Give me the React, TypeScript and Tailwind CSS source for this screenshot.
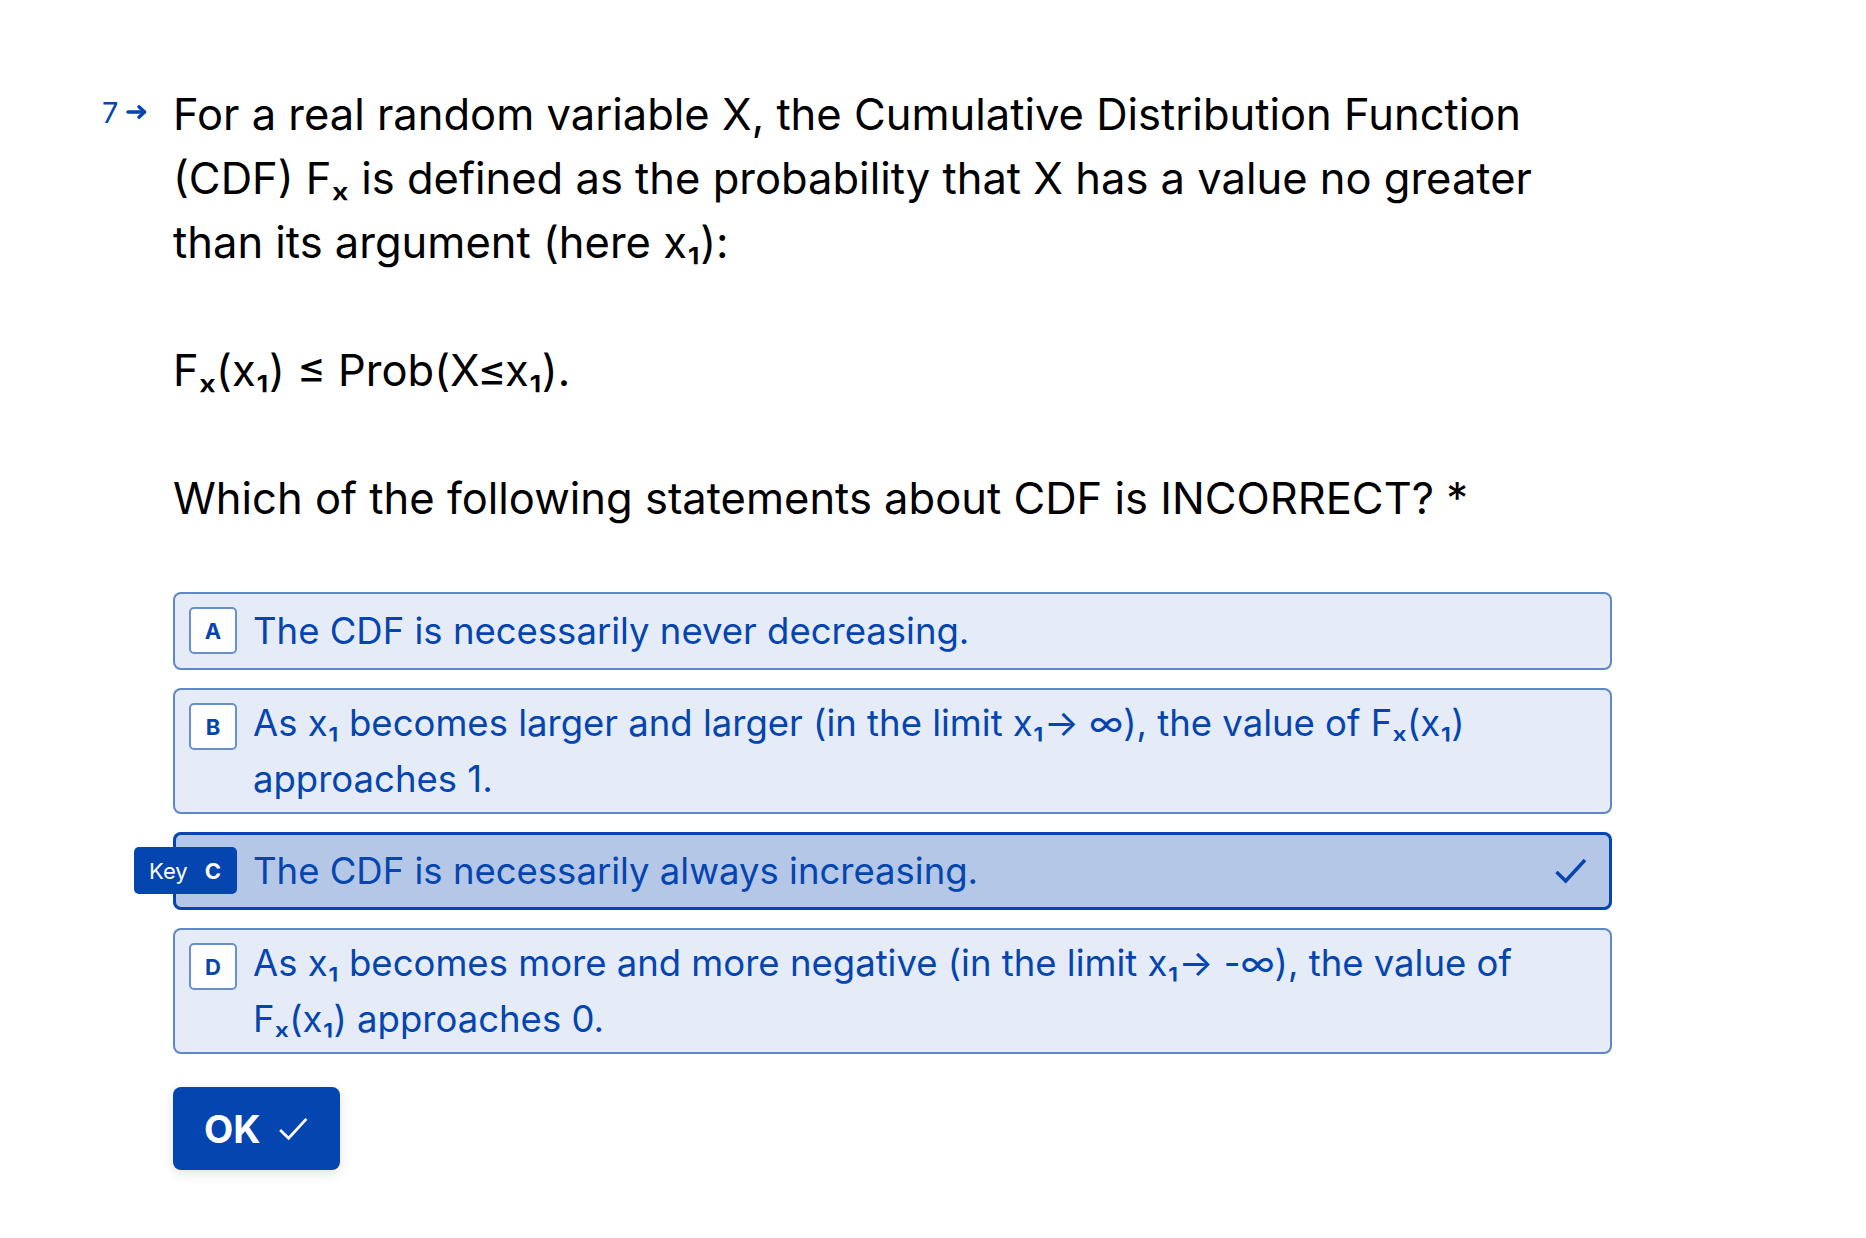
import React from "react";

function CheckIcon({ className, strokeWidth = 3.5 }: { className?: string; strokeWidth?: number }) {
  return (
    <svg className={className} viewBox="0 0 32 26" fill="none" stroke="currentColor" strokeWidth={strokeWidth} strokeLinecap="butt" strokeLinejoin="miter">
      <path d="M1.5 14 L10.7 23 L30 2" />
    </svg>
  );
}

function Option({
  letter,
  selected,
  children,
}: {
  letter: string;
  selected?: boolean;
  children: React.ReactNode;
}) {
  return (
    <div
      className={
        "relative flex items-start rounded-[8px] p-[7px] " +
        (selected
          ? "bg-[#b4c7e7] shadow-[inset_0_0_0_3px_#0445af]"
          : "bg-[#e6ecf7] shadow-[inset_0_0_0_2px_rgba(4,69,175,0.6)]")
      }
    >
      <div className="shrink-0 pl-[9px] pr-[16px] py-[8px]">
        {selected ? (
          <div className="relative w-[48px] h-[48px]">
            <div className="absolute right-0 top-0 h-[47px] w-[103px] rounded-[5px] bg-[#0445af] flex items-center text-white">
              <span className="pl-[15px] text-[22px] leading-none">Key</span>
              <span className="ml-auto w-[48px] text-center text-[22px] font-bold leading-none">{letter}</span>
            </div>
          </div>
        ) : (
          <div className="w-[48px] h-[47px] rounded-[5px] border-2 border-[#688fcf] bg-white flex items-center justify-center text-[22px] font-bold text-[#0445af] leading-none">
            {letter}
          </div>
        )}
      </div>
      <div className="min-h-[64px] flex items-center text-[36.5px] leading-[56px] text-[#0445af]">
        <div>{children}</div>
      </div>
      {selected && (
        <div className="ml-auto self-center mr-[18px] text-[#0445af]">
          <CheckIcon className="w-[32px] h-[26px]" />
        </div>
      )}
    </div>
  );
}

export default function App() {
  return (
    <div className="min-h-screen bg-white font-[family-name:Inter,sans-serif]">
      <div className="flex pl-[102px] pt-[82px] pb-[60px]">
        <div className="w-[71px] shrink-0 h-[60px] flex items-center text-[#0445af]">
          <span className="text-[29px] leading-none">7</span>
          <svg className="ml-[8px] w-[21px] h-[14px]" viewBox="0 0 21 14" fill="none" stroke="currentColor" strokeWidth={3.4} strokeLinecap="round" strokeLinejoin="round">
            <path d="M2 7 H18.5" />
            <path d="M13 1.8 L18.5 7 L13 12.2" />
          </svg>
        </div>
        <div className="w-[1439px]">
          <div className="text-[43.5px] leading-[64px] text-black">
            <p>
              For a real random variable X, the Cumulative Distribution Function
              <br />
              (CDF) Fₓ is defined as the probability that X has a value no greater
              <br />
              than its argument (here x₁):
            </p>
            <div className="h-[64px]" />
            <p>Fₓ(x₁) ≤ Prob(X≤x₁).</p>
            <div className="h-[64px]" />
            <p>Which of the following statements about CDF is INCORRECT? *</p>
          </div>

          <div className="mt-[62px] flex flex-col gap-[18px]">
            <Option letter="A">The CDF is necessarily never decreasing.</Option>
            <Option letter="B">
              As x₁ becomes larger and larger (in the limit x₁→ ∞), the value of Fₓ(x₁)
              <br />
              approaches 1.
            </Option>
            <Option letter="C" selected>
              The CDF is necessarily always increasing.
            </Option>
            <Option letter="D">
              As x₁ becomes more and more negative (in the limit x₁→ -∞), the value of
              <br />
              Fₓ(x₁) approaches 0.
            </Option>
          </div>

          <button className="mt-[33px] h-[83px] px-[31px] flex items-center gap-[17px] rounded-[8px] bg-[#0445af] text-white shadow-[0_3px_12px_rgba(0,0,0,0.12)]">
            <span className="text-[38px] font-bold leading-none">OK</span>
            <CheckIcon className="w-[31px] h-[24px]" strokeWidth={3} />
          </button>
        </div>
      </div>
    </div>
  );
}
